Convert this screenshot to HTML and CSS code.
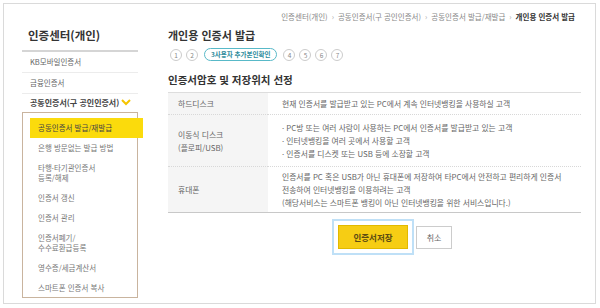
FILE: index.html
```html
<!DOCTYPE html>
<html lang="ko">
<head>
    <meta charset="UTF-8">
    <title>개인용 인증서 발급</title>
    <link rel="stylesheet" href="styles.css">
</head>
<body>
    <div class="frame">
        <div class="side">
            <h2 class="side-title">인증센터(개인)</h2>
            <ul class="menu">
                <li>KB모바일인증서</li>
                <li>금융인증서</li>
                <li class="open">공동인증서(구 공인인증서)<svg width="10" height="7" viewBox="0 0 10 7"><polyline points="1,1 5,5 9,1" fill="none" stroke="#f5c400" stroke-width="2"/></svg></li>
            </ul>
            <ul class="sub">
                <li class="on">공동인증서 발급/재발급</li>
                <li>은행 방문없는 발급 방법</li>
                <li class="two">타행·타기관인증서<br>등록/해제</li>
                <li>인증서 갱신</li>
                <li>인증서 관리</li>
                <li class="two">인증서폐기/<br>수수료환급등록</li>
                <li>영수증/세금계산서</li>
                <li>스마트폰 인증서 복사</li>
            </ul>
        </div>
        <div class="content">
            <p class="path">인증센터(개인)<span class="arr">›</span>공동인증서(구 공인인증서)<span class="arr">›</span>공동인증서 발급/재발급<span class="arr">›</span><b>개인용 인증서 발급</b></p>
            <h1>개인용 인증서 발급</h1>
            <ol class="steps">
                <li>1</li>
                <li>2</li>
                <li class="cur">3사용자 추가본인확인</li>
                <li>4</li>
                <li>5</li>
                <li>6</li>
                <li>7</li>
            </ol>
            <h3>인증서암호 및 저장위치 선정</h3>
            <table>
                <tr class="r-hdd">
                    <th>하드디스크</th>
                    <td>현재 인증서를 발급받고 있는 PC에서 계속 인터넷뱅킹을 사용하실 고객</td>
                </tr>
                <tr class="r-usb">
                    <th>이동식 디스크<br>(플로피/USB)</th>
                    <td>· PC방 또는 여러 사람이 사용하는 PC에서 인증서를 발급받고 있는 고객<br>· 인터넷뱅킹을 여러 곳에서 사용할 고객<br>· 인증서를 디스켓 또는 USB 등에 소장할 고객</td>
                </tr>
                <tr class="r-phone">
                    <th>휴대폰</th>
                    <td>인증서를 PC 혹은 USB가 아닌 휴대폰에 저장하여 타PC에서 안전하고 편리하게 인증서<br>전송하여 인터넷뱅킹을 이용하려는 고객<br>(해당서비스는 스마트폰 뱅킹이 아닌 인터넷뱅킹을 위한 서비스입니다.)</td>
                </tr>
            </table>
            <div class="btns">
                <span class="focus"><button class="save">인증서저장</button></span>
                <button class="cancel">취소</button>
            </div>
        </div>
    </div>
</body>
</html>
```

FILE: styles.css
```css
* {
    margin: 0;
    padding: 0;
    box-sizing: border-box;
}
body {
    font-family: "Noto Sans CJK KR", "Noto Sans", sans-serif;
    color: #666;
    background: #fff;
}
ul, ol {
    list-style: none;
}
.frame {
    margin: 3px;
    width: 593px;
    height: 301px;
    border: 1px solid #dadada;
    display: flex;
}
.side {
    width: 146px;
    padding: 23px 0 0 18px;
}
.side-title {
    width: 116px;
    font-size: 11.5px;
    line-height: 16px;
    color: #333;
    padding: 0 0 7px 6px;
    border-bottom: 2px solid #d5d5d5;
}
.menu, .sub {
    width: 116px;
}
.menu li {
    font-size: 7.5px;
    line-height: 20px;
    padding-left: 8px;
    border-bottom: 1px solid #ececec;
}
.menu li.open {
    display: flex;
    align-items: center;
    gap: 2px;
    font-size: 8px;
    line-height: 17px;
    font-weight: bold;
    color: #444;
    border: 0;
}
.sub {
    margin-top: 1px;
    height: 186px;
    border: 1px solid #c9b49e;
    padding: 5px 0 0 7px;
}
.sub li {
    font-size: 7.5px;
    line-height: 20px;
    padding-left: 8px;
    color: #777;
}
.sub li.two {
    line-height: 10px;
    padding: 5px 0 5px 8px;
}
.sub li.on {
    background: #fbdb0c;
    color: #444;
    margin-right: -6px;
}
.content {
    flex: 1;
    padding: 8px 14px 0 18px;
}
.path {
    text-align: right;
    font-size: 7.5px;
    line-height: 10px;
    padding-right: 6px;
    color: #888;
}
.path b {
    color: #333;
}
.path .arr {
    margin: 0 4px;
    color: #aaa;
}
h1 {
    margin-top: 6px;
    font-size: 11px;
    line-height: 14px;
    color: #333;
}
.steps {
    display: flex;
    align-items: center;
    gap: 4px;
    margin-top: 6px;
    padding-left: 2px;
}
.steps li {
    width: 12px;
    height: 12px;
    border: 1px solid #ccc;
    border-radius: 50%;
    font-size: 6.5px;
    line-height: 10px;
    text-align: center;
    color: #888;
}
.steps li.cur {
    width: auto;
    height: 13px;
    margin: 0 2px;
    padding: 0 6px;
    border: 1.5px solid #58b9c8;
    border-radius: 7px;
    font-weight: bold;
    color: #2e8c9c;
}
h3 {
    margin-top: 12px;
    font-size: 10.5px;
    line-height: 14px;
    color: #333;
}
table {
    width: 100%;
    margin-top: 5px;
    border-collapse: collapse;
    border-top: 1px solid #ddd;
    border-bottom: 1px solid #c8c8c8;
}
th, td {
    font-size: 7.8px;
    line-height: 13px;
    font-weight: normal;
    text-align: left;
    vertical-align: middle;
    color: #666;
    border-bottom: 1px dotted #d8d8d8;
}
th {
    width: 100px;
    background: #f5f5f5;
    padding-left: 10px;
}
td {
    padding-left: 14px;
}
.r-hdd th, .r-hdd td {
    padding-top: 4px;
    padding-bottom: 4px;
}
.r-usb th, .r-usb td {
    padding-top: 6px;
    padding-bottom: 6px;
}
.r-phone th, .r-phone td {
    padding-top: 3px;
    padding-bottom: 3px;
    border-bottom: 0;
}
.btns {
    display: flex;
    align-items: center;
    gap: 2px;
    margin-top: 6px;
    padding-left: 164px;
}
.focus {
    display: block;
    border: 2px solid #bfe0f7;
    padding: 4px;
}
button {
    font-family: inherit;
    cursor: pointer;
}
.save {
    display: block;
    width: 70px;
    height: 24px;
    background: #f6cd14;
    border: 1px solid #e2b900;
    font-size: 8.5px;
    font-weight: bold;
    color: #5c4b12;
}
.cancel {
    width: 36px;
    height: 23px;
    background: #fff;
    border: 1px solid #ccc;
    font-size: 8px;
    color: #666;
}
```
